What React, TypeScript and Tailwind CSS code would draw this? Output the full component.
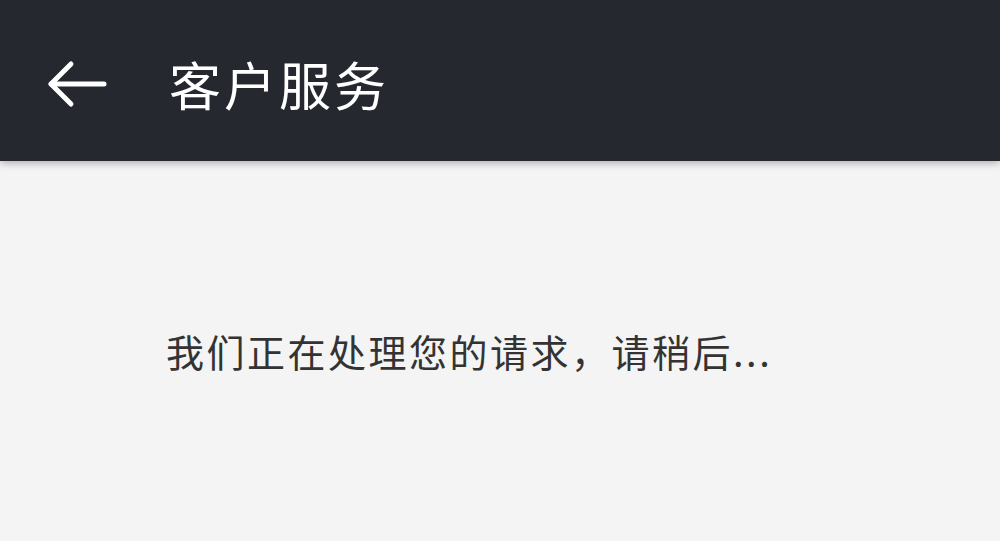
const font = { fontFamily: '"Noto Sans CJK SC", "Noto Sans", sans-serif' };

function BackArrow() {
  return (
    <svg width="60" height="48" viewBox="0 0 60 48" fill="none" stroke="currentColor" strokeWidth="5" strokeLinecap="round" strokeLinejoin="round">
      <path d="M4 24h53" />
      <path d="M24 4L4 24l20 20" />
    </svg>
  );
}

export default function App() {
  return (
    <div className="w-[1000px] h-[541px] bg-[#f4f4f4] flex flex-col overflow-hidden" style={font}>
      {/* Toolbar */}
      <header className="h-[161px] pt-[6px] bg-[#262830] flex items-center shrink-0 shadow-[0_2px_8px_rgba(0,0,0,0.3)] relative z-10">
        <button className="ml-[47px] flex items-center justify-center text-white">
          <BackArrow />
        </button>
        <h1 className="ml-[62px] text-white text-[52px] leading-none tracking-[3px]">客户服务</h1>
      </header>

      {/* Body */}
      <main className="flex-1 pt-[171px] pl-[166px]">
        <p className="text-[#333333] text-[38px] leading-none tracking-[2.5px]">我们正在处理您的请求，请稍后...</p>
      </main>
    </div>
  );
}
